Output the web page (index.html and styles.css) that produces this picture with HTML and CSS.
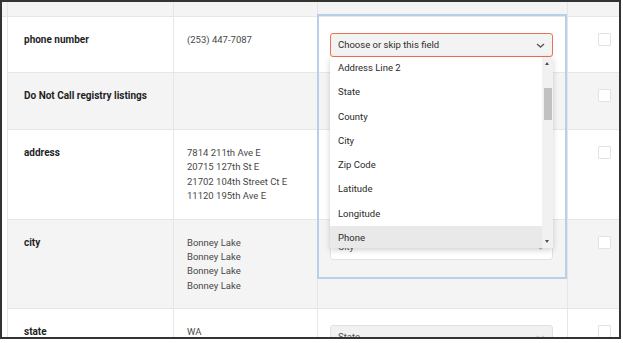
FILE: index.html
```html
<!DOCTYPE html>
<html lang="en">
<head>
<meta charset="UTF-8">
<meta name="viewport" content="width=device-width, initial-scale=1">
<title>Map fields</title>
<link rel="stylesheet" href="styles.css">
</head>
<body>

<div class="frame">
  <div class="sheet">

    <div class="row head">
      <div class="cell"></div>
      <div class="cell"></div>
      <div class="cell"></div>
      <div class="cell"></div>
    </div>

    <div class="row">
      <div class="cell label">phone number</div>
      <div class="cell value">(253) 447-7087</div>
      <div class="cell pick">
        <div class="select open">
          <span>Choose or skip this field</span>
          <svg class="chev" width="9" height="5" viewBox="0 0 9 5"><path d="M1 1 L4.5 4 L8 1" fill="none" stroke="#5a5a5a" stroke-width="1.4"/></svg>
          <div class="menu">
            <ul class="options">
              <li>Address Line 2</li>
              <li>State</li>
              <li>County</li>
              <li>City</li>
              <li>Zip Code</li>
              <li>Latitude</li>
              <li>Longitude</li>
              <li class="hover">Phone</li>
            </ul>
            <div class="scrollbar">
              <span class="arrow up"></span>
              <span class="thumb"></span>
              <span class="arrow down"></span>
            </div>
          </div>
        </div>
      </div>
      <div class="cell check"><span class="box"></span></div>
    </div>

    <div class="row shade">
      <div class="cell label">Do Not Call registry listings</div>
      <div class="cell value"></div>
      <div class="cell pick"><div class="select"><span></span></div></div>
      <div class="cell check"><span class="box"></span></div>
    </div>

    <div class="row">
      <div class="cell label">address</div>
      <div class="cell value">7814 211th Ave E<br>20715 127th St E<br>21702 104th Street Ct E<br>11120 195th Ave E</div>
      <div class="cell pick"><div class="select"><span></span></div></div>
      <div class="cell check"><span class="box"></span></div>
    </div>

    <div class="row shade">
      <div class="cell label">city</div>
      <div class="cell value">Bonney Lake<br>Bonney Lake<br>Bonney Lake<br>Bonney Lake</div>
      <div class="cell pick">
        <div class="select light">
          <span>City</span>
          <svg class="chev" width="9" height="5" viewBox="0 0 9 5"><path d="M1 1 L4.5 4 L8 1" fill="none" stroke="#c8c8c8" stroke-width="1.4"/></svg>
        </div>
      </div>
      <div class="cell check"><span class="box"></span></div>
    </div>

    <div class="row">
      <div class="cell label">state</div>
      <div class="cell value">WA</div>
      <div class="cell pick">
        <div class="select">
          <span>State</span>
          <svg class="chev" width="9" height="5" viewBox="0 0 9 5"><path d="M1 1 L4.5 4 L8 1" fill="none" stroke="#c8c8c8" stroke-width="1.4"/></svg>
        </div>
      </div>
      <div class="cell check"><span class="box"></span></div>
    </div>

  </div>

  <div class="focus-ring"></div>
</div>

</body>
</html>
```

FILE: styles.css
```css
* { box-sizing: border-box; }
body {
  margin: 0;
  background: #fff;
  font-family: Roboto, "Liberation Sans", Arial, sans-serif;
  font-size: 10px;
  color: #333;
}

.frame {
  position: relative;
  width: 621px;
  height: 339px;
  border: 2px solid #333;
  overflow: hidden;
  background: #fff;
}
.sheet { margin-left: 5px; }

.row {
  display: grid;
  grid-template-columns: 167px 144px 250px 1fr;
  border-bottom: 1px solid #e6e6e6;
}
.row.shade { background: #f4f4f4; }
.row.head {
  height: 15px;
  margin-left: -5px;
  padding-left: 5px;
  background: #f4f4f4;
}

.cell {
  border-right: 1px solid #e6e6e6;
  padding: 16px 13px 15px;
  line-height: 14.4px;
}
.cell:first-child { border-left: 1px solid #e6e6e6; padding-left: 16px; }
.cell:last-child { border-right: 0; padding-left: 30px; }
.head .cell { padding: 0; }

.label { font-weight: 700; color: #1f1f1f; }
.value { color: #484848; font-size: 9.5px; }
.pick { padding: 16px 0 15px 12px; }
.shade .pick { padding-bottom: 16px; }

.select {
  position: relative;
  display: flex;
  align-items: center;
  justify-content: space-between;
  width: 223px;
  height: 24px;
  padding: 0 7px;
  border: 1px solid #e2e2e2;
  border-radius: 3px;
  background: #f1f1f1;
  color: #555;
  font-size: 9.5px;
}
.select.open { border-color: #ec7352; color: #2e2e2e; background: #f3f3f3; }
.select.light { background: #fff; }

.menu {
  position: absolute;
  top: 23px;
  left: -1px;
  width: 223px;
  height: 191px;
  background: #fff;
  box-shadow: 0 2px 6px rgba(0,0,0,0.18);
  overflow: hidden;
  z-index: 5;
}
.options {
  list-style: none;
  margin: -1px 11px 0 0;
  padding: 0;
}
.options li {
  height: 24.3px;
  line-height: 24.3px;
  padding-left: 8px;
  color: #2a2a2a;
}
.options li.hover { background: #e9e9e9; }

.scrollbar {
  position: absolute;
  top: 0;
  right: 0;
  bottom: 0;
  width: 11px;
  background: #f1f1f1;
}
.arrow {
  position: absolute;
  left: 3px;
  width: 0;
  height: 0;
  border-left: 2.5px solid transparent;
  border-right: 2.5px solid transparent;
}
.arrow.up { top: 5px; border-bottom: 3px solid #505050; }
.arrow.down { bottom: 5px; border-top: 3px solid #505050; }
.thumb {
  position: absolute;
  top: 31px;
  left: 2px;
  width: 8px;
  height: 32px;
  background: #c1c1c1;
}

.check { padding-top: 16px; }
.box {
  display: block;
  width: 13px;
  height: 13px;
  border: 1px solid #e3e3e3;
  border-radius: 1px;
  background: #fff;
}

.focus-ring {
  position: absolute;
  left: 315px;
  top: 12px;
  width: 250px;
  height: 265px;
  border: 2px solid #b8cfec;
  pointer-events: none;
}
```
